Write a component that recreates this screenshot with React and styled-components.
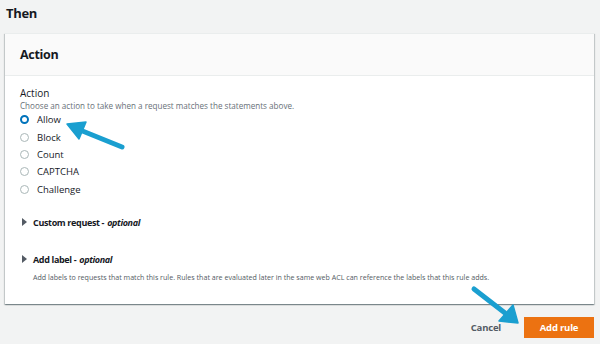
import React from "react";
import styled, { createGlobalStyle } from "styled-components";

const GlobalStyle = createGlobalStyle`
  html, body {
    margin: 0;
    padding: 0;
    background: #f2f3f3;
    font-family: "Open Sans", "Liberation Sans", sans-serif;
    color: #16191f;
  }
`;

const Page = styled.div`
  position: relative;
  width: 600px;
  height: 344px;
  overflow: hidden;
  padding: 0 6px 0 5px;
  box-sizing: border-box;
`;

const PageTitle = styled.h2`
  margin: 0;
  padding: 4px 0 0 1px;
  height: 33px;
  box-sizing: border-box;
  font-size: 13px;
  font-weight: 700;
  letter-spacing: -0.3px;
`;

const Card = styled.section`
  background: #fff;
  border-top: 1px solid #eaeded;
  box-shadow: 0 1px 1px 0 rgba(0, 28, 36, 0.3), 1px 1px 1px 0 rgba(0, 28, 36, 0.15),
    -1px 1px 1px 0 rgba(0, 28, 36, 0.15);
`;

const CardHeader = styled.header`
  height: 41px;
  background: #fafafa;
  border-bottom: 1px solid #eaeded;
  display: flex;
  align-items: center;
  padding: 0 15px;
  font-size: 12.5px;
  font-weight: 700;
  letter-spacing: -0.3px;
`;

const CardBody = styled.div`
  padding: 11px 15px 22px;
`;

const FieldLabel = styled.div`
  font-size: 10px;
  line-height: 13px;
`;

const Hint = styled.div`
  font-size: 8.1px;
  line-height: 11px;
  color: #687078;
`;

const RadioList = styled.div`
  display: flex;
  flex-direction: column;
`;

const RadioRow = styled.label`
  display: flex;
  align-items: center;
  height: 17.4px;
  font-size: 9.5px;
`;

const Dot = styled.span`
  width: 9px;
  height: 9px;
  border-radius: 50%;
  box-sizing: border-box;
  margin-right: 8px;
  border: ${(p) => (p.$on ? "2.5px solid #0073bb" : "1px solid #aab7b8")};
  background: #fff;
`;

const Expander = styled.div`
  margin-top: ${(p) => p.$top}px;
  display: flex;
  align-items: center;
  font-size: 9px;
  font-weight: 700;
  letter-spacing: -0.35px;
  color: #16191f;

  em {
    font-style: italic;
    margin-left: 3px;
  }
`;

const Caret = styled.span`
  width: 0;
  height: 0;
  border-top: 4px solid transparent;
  border-bottom: 4px solid transparent;
  border-left: 5px solid #545b64;
  margin: 0 6px 0 2px;
`;

const ExpanderHint = styled.div`
  font-size: 7.1px;
  color: #545b64;
  margin: 6px 0 0 13px;
`;

const Footer = styled.div`
  display: flex;
  justify-content: flex-end;
  align-items: center;
  gap: 23px;
  margin-top: 13px;
`;

const LinkButton = styled.button`
  border: none;
  background: none;
  font-family: inherit;
  font-size: 9.5px;
  font-weight: 700;
  letter-spacing: -0.2px;
  color: #545b64;
  padding: 0;
`;

const PrimaryButton = styled.button`
  border: none;
  background: #ec7211;
  color: #fff;
  font-family: inherit;
  font-size: 9.5px;
  font-weight: 700;
  letter-spacing: -0.2px;
  width: 70px;
  height: 21px;
  padding: 0;
`;

const Arrow = styled.svg`
  position: absolute;
  left: 0;
  top: 0;
  pointer-events: none;
`;

const options = ["Allow", "Block", "Count", "CAPTCHA", "Challenge"];

export default function App() {
  return (
    <>
      <GlobalStyle />
      <Page>
        <PageTitle>Then</PageTitle>
        <Card>
          <CardHeader>Action</CardHeader>
          <CardBody>
            <FieldLabel>Action</FieldLabel>
            <Hint>Choose an action to take when a request matches the statements above.</Hint>
            <RadioList>
              {options.map((o, i) => (
                <RadioRow key={o}>
                  <Dot $on={i === 0} />
                  {o}
                </RadioRow>
              ))}
            </RadioList>
            <Expander $top={18}>
              <Caret />
              Custom request - <em>optional</em>
            </Expander>
            <Expander $top={24}>
              <Caret />
              Add label - <em>optional</em>
            </Expander>
            <ExpanderHint>
              Add labels to requests that match this rule. Rules that are evaluated later in the same web ACL can
              reference the labels that this rule adds.
            </ExpanderHint>
          </CardBody>
        </Card>
        <Footer>
          <LinkButton>Cancel</LinkButton>
          <PrimaryButton>Add rule</PrimaryButton>
        </Footer>
        <Arrow width="600" height="344" viewBox="0 0 600 344">
          <g fill="#1a9fd0" stroke="#1a9fd0" strokeLinecap="round" strokeLinejoin="round">
            <line x1="122" y1="147" x2="80" y2="130" strokeWidth="5" />
            <polygon points="67,124 86,122 79,139" strokeWidth="1.5" />
            <line x1="474" y1="289" x2="505" y2="313" strokeWidth="5" />
            <polygon points="518,323 513,305 499,321" strokeWidth="1.5" />
          </g>
        </Arrow>
      </Page>
    </>
  );
}
